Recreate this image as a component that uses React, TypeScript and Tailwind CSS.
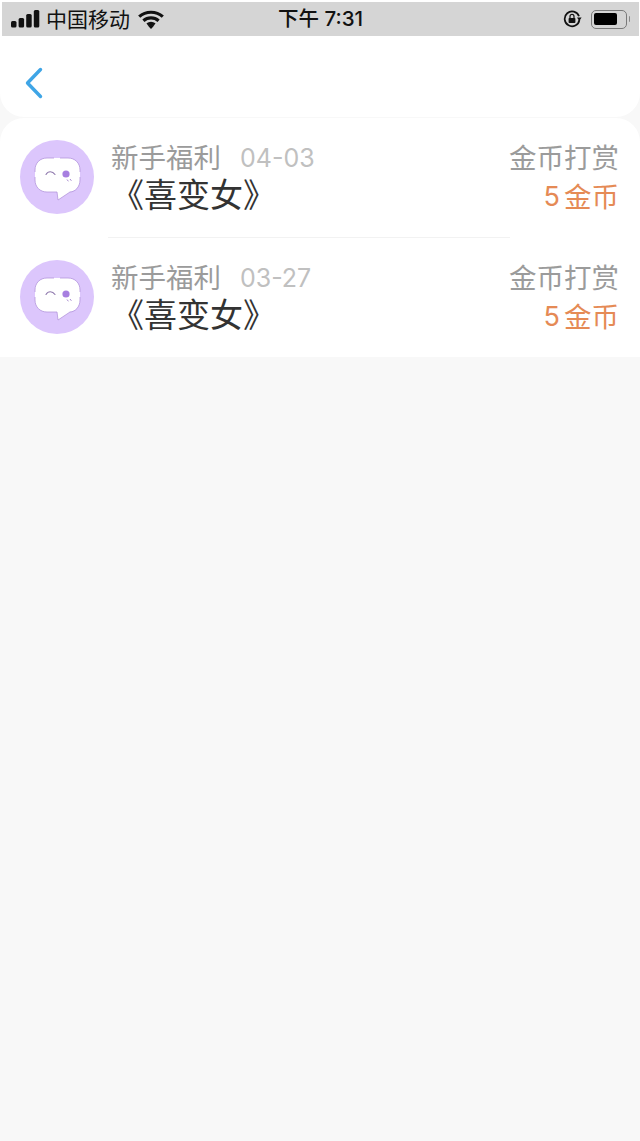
const cjk = "font-['Inter','Noto_Sans_CJK_SC',sans-serif]"

function SignalIcon() {
  return (
    <svg width="29" height="18" viewBox="0 0 29 18" fill="#111">
      <rect x="0" y="11" width="5.5" height="6.5" rx="1.5" />
      <rect x="7.6" y="8" width="5.5" height="9.5" rx="1.5" />
      <rect x="15.2" y="4" width="5.5" height="13.5" rx="1.5" />
      <rect x="22.8" y="0" width="5.5" height="17.5" rx="1.5" />
    </svg>
  )
}

function WifiIcon() {
  return (
    <svg width="26" height="19" viewBox="0 0 26 19" fill="none" stroke="#111" strokeWidth="3.2">
      <path d="M1.2 6.6C7.8 .8 18.2 .8 24.8 6.6" />
      <path d="M5.4 10.8C9.8 7 16.2 7 20.6 10.8" />
      <path d="M9.4 14.6C11.6 13 14.4 13 16.6 14.6" />
      <path d="M13 19l-3-3.2c1.8-1.3 4.2-1.3 6 0z" fill="#111" stroke="none" />
    </svg>
  )
}

function LockRotateIcon() {
  return (
    <svg width="19" height="18" viewBox="0 0 19 18" fill="none">
      <path d="M16 6.2A7.4 7.4 0 1 0 16.4 10" stroke="#111" strokeWidth="1.7" />
      <path d="M14 7.6h4.6L16.3 11z" fill="#111" />
      <rect x="5.6" y="8" width="6.8" height="5" rx="0.8" fill="#111" />
      <path d="M7 8V6.4a2 2 0 0 1 4 0V8" stroke="#111" strokeWidth="1.2" />
    </svg>
  )
}

function BatteryIcon() {
  return (
    <div className="flex items-center gap-[2px]">
      <div className="flex h-[19px] w-[36px] items-center rounded-[5px] border-[1.5px] border-[#7a7a7a] pl-[2px]">
        <div className="h-[12px] w-[23px] rounded-[2px] bg-black" />
      </div>
      <div className="h-[6px] w-[1px] rounded-r bg-[#8a8a8a]" />
    </div>
  )
}

function BotAvatar() {
  return (
    <div className="flex h-[74px] w-[74px] shrink-0 items-center justify-center rounded-full bg-[#dcc6fc]">
      <svg width="50" height="50" viewBox="0 0 50 50" fill="none">
        <path
          d="M15 6H36C43 6 48 11 48 18V28C48 35 43 40 36 40H38L26 48L25 40H15C8 40 3 35 3 28V18C3 11 8 6 15 6Z"
          fill="#fff"
        />
        <path
          d="M15 6H22M28 6H36C43 6 48 11 48 18V20M48 25V28C48 35 43 40 38 40L26 48L25 40H15C8 40 3 35 3 28V25M3 20V18C3 11 8 6 15 6"
          stroke="#b497dc"
          strokeWidth="0.8"
        />
        <path d="M14 22.5C16 18.8 20.5 18.8 23 22.5" stroke="#8f79ad" strokeWidth="1.1" strokeLinecap="round" />
        <circle cx="34" cy="22" r="3.6" fill="#a77fe0" />
        <path d="M35 27.5l1.4 1.8M38 27l1.4 1.8" stroke="#a98bd0" strokeWidth="1" />
      </svg>
    </div>
  )
}

type RewardRowProps = {
  date: string
  divider?: boolean
}

function RewardRow({ date, divider }: RewardRowProps) {
  return (
    <div className="relative flex h-[119.5px] items-start pl-[20px] pr-[21px] pt-[22px]">
      <BotAvatar />
      <div className="ml-[17px] min-w-0 flex-1">
        <div className="flex h-[36px] items-center">
          <span className="text-[27.5px] leading-[36px] text-[#9b9b9b]">新手福利</span>
          <span className="ml-[19px] text-[25px] leading-[36px] text-[#c0c0c0]">{date}</span>
        </div>
        <p className="-mt-px text-[33px] leading-[40px] text-[#333333]">《喜变女》</p>
      </div>
      <div className="flex flex-col items-end">
        <span className="text-[27.5px] leading-[36px] text-[#9b9b9b]">金币打赏</span>
        <span className="mt-[2px] flex text-[27.5px] leading-[38px] text-[#e58a55]">
          <span className="mr-[4px] text-[27px]">5</span>金币
        </span>
      </div>
      {divider && <div className="absolute bottom-0 left-[108px] right-[130px] h-px bg-[#f2f2f2]" />}
    </div>
  )
}

export default function App() {
  return (
    <div className={`min-h-[1141px] w-[640px] bg-[#f8f8f8] ${cjk}`}>
      <div className="bg-white pl-[2px] pr-px pt-[2px]">
        <div className="flex h-[34px] items-center justify-between bg-[#d5d5d5] pl-[9px] pr-[9px]">
          <div className="flex w-[240px] items-center">
            <SignalIcon />
            <span className="ml-[6px] text-[21px] leading-none text-[#111]">中国移动</span>
            <span className="ml-[8px]">
              <WifiIcon />
            </span>
          </div>
          <span className="text-[20.5px] font-medium leading-none text-[#111]">下午 7:31</span>
          <div className="flex w-[240px] items-center justify-end gap-[9px]">
            <LockRotateIcon />
            <BatteryIcon />
          </div>
        </div>
      </div>
      <div className="flex h-[81px] items-center rounded-b-[24px] bg-white pl-[24px] pt-[12px]">
        <svg width="20" height="32" viewBox="0 0 20 32" fill="none" stroke="#3fa5e6" strokeWidth="3.4" strokeLinecap="round" strokeLinejoin="round">
          <path d="M16.5 2.5L3.5 16L16.5 29.5" />
        </svg>
      </div>
      <div className="mt-px rounded-t-[24px] bg-white">
        <RewardRow date="04-03" divider />
        <RewardRow date="03-27" />
      </div>
    </div>
  )
}
